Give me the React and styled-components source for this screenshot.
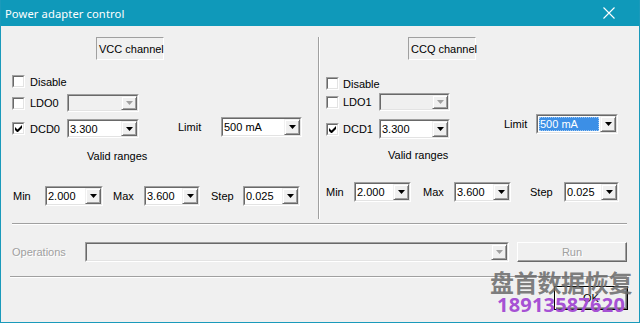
import React from 'react';
import styled, { createGlobalStyle } from 'styled-components';

const Global = createGlobalStyle`
  html, body { margin: 0; padding: 0; background: #f0f0f0; }
  body { font-family: "Liberation Sans", Arial, sans-serif; font-size: 11px; color: #000; }
`;

const Window = styled.div`
  position: relative;
  width: 640px;
  height: 323px;
  box-sizing: border-box;
  border: 1px solid #1a9abb;
  border-top: none;
  background: #f0f0f0;
  display: flex;
  flex-direction: column;
  overflow: hidden;
`;

const TitleBar = styled.div`
  height: 26px;
  margin: 0 -1px;
  flex: none;
  background: #0f99ba;
  color: #fff;
  display: flex;
  align-items: center;
  justify-content: space-between;
  padding: 0 25px 0 5px;
  font-family: "Noto Sans", "Liberation Sans", sans-serif;
  font-size: 11.2px;
  letter-spacing: 0.1px;
`;

const Channels = styled.div`
  display: flex;
  height: 197px;
  flex: none;
`;

const Panel = styled.div`
  box-sizing: border-box;
  width: ${(p) => (p.$w ? `${p.$w}px` : 'auto')};
  flex: ${(p) => (p.$w ? 'none' : '1')};
  display: flex;
  flex-direction: column;
  padding-left: ${(p) => p.$pad}px;
`;

const VSep = styled.div`
  width: 0;
  margin-top: 11px;
  height: 182px;
  border-left: 1px solid #a0a0a0;
  border-right: 1px solid #fff;
`;

const HSep = styled.div`
  height: 0;
  flex: none;
  border-top: 1px solid #a0a0a0;
  border-bottom: 1px solid #fff;
  margin: ${(p) => p.$mt}px 12px 0 ${(p) => p.$ml}px;
`;

const HeaderBox = styled.div`
  box-sizing: border-box;
  margin-top: 11px;
  margin-left: ${(p) => p.$x}px;
  width: 68px;
  height: 23px;
  border: 1px solid;
  border-color: #a0a0a0 #fff #fff #a0a0a0;
  display: flex;
  align-items: center;
  padding-left: 2px;
  white-space: nowrap;
`;

const Row = styled.div`
  display: flex;
  align-items: ${(p) => p.$align || 'center'};
  margin-top: ${(p) => p.$mt}px;
  height: ${(p) => p.$h}px;
`;

const Group = styled.div`
  display: flex;
  align-items: center;
  margin-top: ${(p) => p.$dy || 0}px;
  margin-left: ${(p) => p.$ml || 0}px;
`;

const Label = styled.span`
  width: ${(p) => p.$w}px;
  margin-left: ${(p) => p.$ml || 0}px;
  flex: none;
  white-space: nowrap;
  color: ${(p) => (p.$disabled ? '#a0a0a0' : '#000')};
  text-shadow: ${(p) => (p.$disabled ? '1px 1px 0 #fff' : 'none')};
`;

const Caption = styled.div`
  margin-top: ${(p) => p.$mt}px;
  margin-left: ${(p) => p.$ml}px;
  line-height: 13px;
`;

const Box = styled.span`
  box-sizing: border-box;
  width: 13px;
  height: 13px;
  flex: none;
  margin-right: ${(p) => p.$gap}px;
  border: 1px solid;
  border-color: #a0a0a0 #fff #fff #a0a0a0;
  display: flex;
`;

const BoxInner = styled.span`
  flex: 1;
  border: 1px solid;
  border-color: #696969 #e3e3e3 #e3e3e3 #696969;
  background: #fff;
  display: flex;
  align-items: center;
  justify-content: center;
`;

const ComboFrame = styled.div`
  box-sizing: border-box;
  width: ${(p) => p.$w}px;
  height: ${(p) => p.$h}px;
  flex: none;
  margin-left: ${(p) => p.$ml || 0}px;
  border: 1px solid;
  border-color: #a0a0a0 #fff #fff #a0a0a0;
  display: flex;
`;

const ComboInner = styled.div`
  flex: 1;
  display: flex;
  border: 1px solid;
  border-color: #696969 #e3e3e3 #e3e3e3 #696969;
  background: ${(p) => (p.$disabled ? '#f0f0f0' : '#fff')};
  min-width: 0;
`;

const ComboText = styled.div`
  flex: 1;
  display: flex;
  align-items: center;
  padding-left: 1px;
  min-width: 0;
`;

const Selected = styled.span`
  flex: 1;
  align-self: stretch;
  display: flex;
  align-items: center;
  margin: 1px 1px 1px 0;
  padding-left: 1px;
  background: #3c8fe6;
  color: #fff;
  outline: 1px dotted #9cc6f2;
  outline-offset: -1px;
`;

const ArrowBtn = styled.div`
  box-sizing: border-box;
  width: 16px;
  flex: none;
  background: #f0f0f0;
  border: 1px solid;
  border-color: #f0f0f0 #696969 #696969 #f0f0f0;
  box-shadow: inset 1px 1px 0 #fff, inset -1px -1px 0 #a0a0a0;
  display: flex;
  align-items: center;
  justify-content: center;
`;

const Button = styled.div`
  box-sizing: border-box;
  width: ${(p) => p.$w}px;
  height: ${(p) => p.$h}px;
  margin-left: ${(p) => p.$ml || 0}px;
  flex: none;
  display: flex;
  align-items: center;
  justify-content: center;
  background: #f0f0f0;
  border: 1px solid;
  border-color: ${(p) => (p.$default ? '#000' : '#fff #696969 #696969 #fff')};
  box-shadow: ${(p) =>
    p.$default
      ? 'inset 1px 1px 0 #fff, inset -1px -1px 0 #696969, inset -2px -2px 0 #a0a0a0'
      : 'inset -1px -1px 0 #a0a0a0'};
  color: ${(p) => (p.$disabled ? '#a0a0a0' : '#000')};
  text-shadow: ${(p) => (p.$disabled ? '1px 1px 0 #fff' : 'none')};
`;

const OpsRow = styled.div`
  display: flex;
  align-items: center;
  margin-top: 17px;
  padding-left: 11px;
  height: 20px;
  flex: none;
`;

const Footer = styled.div`
  display: flex;
  justify-content: flex-end;
  padding-right: 11px;
  margin-top: 8px;
`;

const Watermark = styled.div`
  position: absolute;
  left: 489px;
  top: 270px;
  display: flex;
  flex-direction: column;
  pointer-events: none;
`;

const WmCn = styled.div`
  font-family: "Noto Sans CJK SC", sans-serif;
  font-weight: 700;
  font-size: 24px;
  line-height: 24px;
  color: rgba(105, 105, 105, 0.85);
  letter-spacing: -0.3px;
`;

const WmNum = styled.div`
  font-family: "Noto Sans", sans-serif;
  font-weight: 700;
  font-size: 20px;
  line-height: 20px;
  margin-top: 1px;
  margin-left: 7px;
  letter-spacing: 0.2px;
  color: #a651d4;
`;

const Arrow = ({ disabled }) => (
  <svg width="7" height="4" viewBox="0 0 7 4">
    <path d="M0 0h7L3.5 4z" fill={disabled ? '#a0a0a0' : '#000'} />
  </svg>
);

const Check = () => (
  <svg width="7" height="7" viewBox="0 0 7 7">
    <path d="M0 2v3l2 2h1l4-4V0L2.5 4.5z" fill="#000" />
  </svg>
);

const Checkbox = ({ checked, gap }) => (
  <Box $gap={gap}>
    <BoxInner>{checked && <Check />}</BoxInner>
  </Box>
);

const Combo = ({ w, h, ml, value, disabled, selected }) => (
  <ComboFrame $w={w} $h={h} $ml={ml}>
    <ComboInner $disabled={disabled}>
      <ComboText>{selected ? <Selected>{value}</Selected> : value}</ComboText>
      <ArrowBtn>
        <Arrow disabled={disabled} />
      </ArrowBtn>
    </ComboInner>
  </ComboFrame>
);

const CheckGroup = ({ cfg, checked, label, dy, children }) => (
  <Group $dy={dy}>
    <Checkbox checked={checked} gap={cfg.gap} />
    <Label $w={cfg.labelW}>{label}</Label>
    {children}
  </Group>
);

const ChannelPanel = ({ cfg }) => (
  <Panel $w={cfg.width} $pad={cfg.pad}>
    <HeaderBox $x={cfg.headerX}>{cfg.title}</HeaderBox>
    <Row $mt={cfg.rows.disable} $h={13}>
      <CheckGroup cfg={cfg} label="Disable" />
    </Row>
    <Row $mt={cfg.rows.ldo} $h={18}>
      <CheckGroup cfg={cfg} label={cfg.ldo}>
        <Combo w={cfg.comboW} h={18} disabled value="" />
      </CheckGroup>
    </Row>
    <Row $mt={cfg.rows.dcd} $h={cfg.rows.dcdH} $align="flex-start">
      <CheckGroup cfg={cfg} checked label={cfg.dcd} dy={cfg.rows.dcdDy}>
        <Combo w={cfg.comboW} h={cfg.rows.dcdComboH} value="3.300" />
      </CheckGroup>
      <Group $ml={cfg.limit.ml} $dy={cfg.rows.limitDy}>
        <Label $w={cfg.limit.labelW}>Limit</Label>
        <Combo w={cfg.limit.w} h={20} value="500 mA" selected={cfg.limit.selected} />
      </Group>
    </Row>
    <Caption $mt={cfg.rows.valid} $ml={cfg.validX}>Valid ranges</Caption>
    <Row $mt={cfg.rows.min} $h={cfg.rows.minH}>
      {cfg.ranges.map((r) => (
        <React.Fragment key={r.label}>
          <Label $w={r.labelW} $ml={r.ml}>{r.label}</Label>
          <Combo w={r.w} h={20} value={r.value} />
        </React.Fragment>
      ))}
    </Row>
  </Panel>
);

const left = {
  width: 317,
  pad: 11,
  title: 'VCC channel',
  headerX: 84,
  gap: 5,
  labelW: 37,
  comboW: 72,
  ldo: 'LDO0',
  dcd: 'DCD0',
  validX: 75,
  rows: { disable: 15, ldo: 6, dcd: 5, dcdH: 20, dcdDy: 2, dcdComboH: 19, limitDy: 0, valid: 13, min: 22, minH: 21 },
  limit: { ml: 39, labelW: 43, w: 81, selected: false },
  ranges: [
    { label: 'Min', ml: 1, labelW: 32, w: 58, value: '2.000' },
    { label: 'Max', ml: 10, labelW: 31, w: 56, value: '3.600' },
    { label: 'Step', ml: 11, labelW: 32, w: 57, value: '0.025' },
  ],
};

const right = {
  width: 0,
  pad: 6,
  title: 'CCQ channel',
  headerX: 82,
  gap: 4,
  labelW: 36,
  comboW: 71,
  ldo: 'LDO1',
  dcd: 'DCD1',
  validX: 62,
  rows: { disable: 17, ldo: 3, dcd: 3, dcdH: 24, dcdDy: 5, dcdComboH: 20, limitDy: 0, valid: 11, min: 19, minH: 22 },
  limit: { ml: 54, labelW: 32, w: 82, selected: true },
  ranges: [
    { label: 'Min', ml: 0, labelW: 28, w: 57, value: '2.000' },
    { label: 'Max', ml: 12, labelW: 31, w: 57, value: '3.600' },
    { label: 'Step', ml: 19, labelW: 34, w: 55, value: '0.025' },
  ],
};

export default function App() {
  return (
    <>
      <Global />
      <Window>
        <TitleBar>
          <span>Power adapter control</span>
          <svg width="12" height="12" viewBox="0 0 12 12">
            <path d="M0.5 0.5l11 11M11.5 0.5l-11 11" stroke="#fff" strokeWidth="1.1" />
          </svg>
        </TitleBar>
        <Channels>
          <ChannelPanel cfg={left} />
          <VSep />
          <ChannelPanel cfg={right} />
        </Channels>
        <HSep $mt={0} $ml={11} />
        <OpsRow>
          <Label $w={73} $disabled>Operations</Label>
          <Combo w={424} h={20} disabled value="" />
          <Button $w={110} $h={20} $ml={8} $disabled>Run</Button>
        </OpsRow>
        <HSep $mt={14} $ml={9} />
        <Footer>
          <Button $w={74} $h={24} $default>OK</Button>
        </Footer>
        <Watermark>
          <WmCn>盘首数据恢复</WmCn>
          <WmNum>18913587620</WmNum>
        </Watermark>
      </Window>
    </>
  );
}
